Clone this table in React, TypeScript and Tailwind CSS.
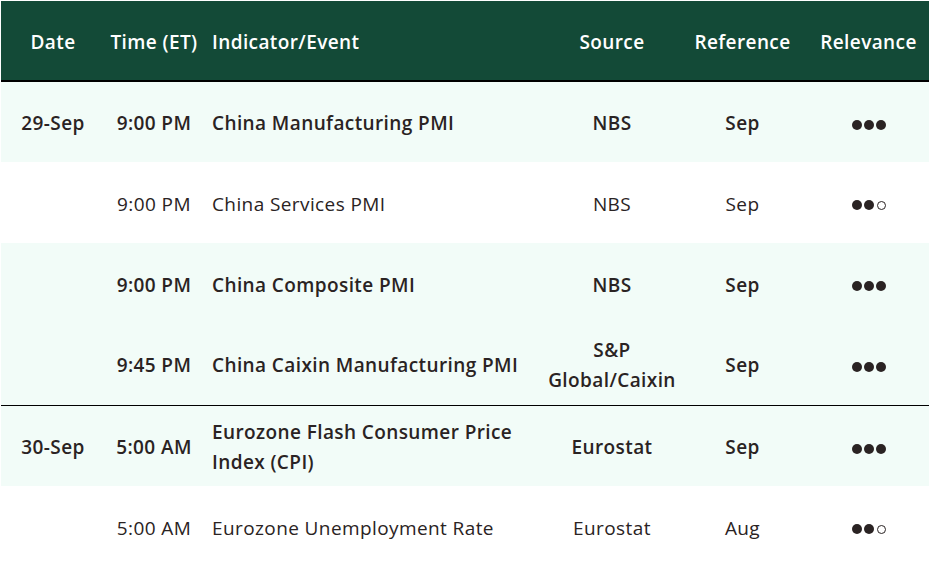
const ROWS = [
  { date: "29-Sep", time: "9:00 PM", event: "China Manufacturing PMI", source: "NBS", ref: "Sep", rel: 3, bold: true },
  { date: "", time: "9:00 PM", event: "China Services PMI", source: "NBS", ref: "Sep", rel: 2, bold: false },
  { date: "", time: "9:00 PM", event: "China Composite PMI", source: "NBS", ref: "Sep", rel: 3, bold: true },
  { date: "", time: "9:45 PM", event: "China Caixin Manufacturing PMI", source: "S&P Global/Caixin", ref: "Sep", rel: 3, bold: true, divider: true },
  { date: "30-Sep", time: "5:00 AM", event: "Eurozone Flash Consumer Price Index (CPI)", source: "Eurostat", ref: "Sep", rel: 3, bold: true },
  { date: "", time: "5:00 AM", event: "Eurozone Unemployment Rate", source: "Eurostat", ref: "Aug", rel: 2, bold: false },
];

function Dots({ n }: { n: number }) {
  return (
    <span className="inline-flex items-center gap-[2px] align-middle">
      {[0, 1, 2].map((i) =>
        i < n ? (
          <span key={i} className="h-[10px] w-[10px] rounded-full bg-[#2a2323]" />
        ) : (
          <span key={i} className="ml-px h-[9px] w-[9px] rounded-full border border-[#2a2323]" />
        )
      )}
    </span>
  );
}

export default function App() {
  return (
    <div className="min-h-[576px] bg-white pl-px pt-px" style={{ fontFamily: "'Open Sans', 'Noto Sans', sans-serif" }}>
      <table className="w-[928px] table-fixed border-collapse text-[19px] leading-[30px] tracking-[0.4px] text-[#2a2323]">
        <colgroup>
          <col className="w-[104px]" />
          <col className="w-[98px]" />
          <col className="w-[344px]" />
          <col className="w-[130px]" />
          <col className="w-[131px]" />
          <col className="w-[121px]" />
        </colgroup>
        <thead>
          <tr className="h-[80px] border-b-2 border-black bg-[#134a37] text-white">
            <th className="px-1 pt-[2px] text-center font-semibold">Date</th>
            <th className="px-0 pt-[2px] text-center font-semibold">Time (ET)</th>
            <th className="px-[9px] pt-[2px] text-left font-semibold">Indicator/Event</th>
            <th className="px-1 pt-[2px] text-center font-semibold">Source</th>
            <th className="px-1 pt-[2px] text-center font-semibold">Reference</th>
            <th className="px-1 pt-[2px] text-center font-semibold">Relevance</th>
          </tr>
        </thead>
        <tbody>
          {ROWS.map((r, i) => (
            <tr
              key={i}
              className={[
                "h-[81px]",
                r.bold ? "bg-[#f2fcf8] font-semibold" : "bg-white font-normal",
                r.divider ? "border-b border-black" : "",
              ].join(" ")}
            >
              <td className="px-1 pt-[2px] text-center">{r.date}</td>
              <td className="px-0 pt-[2px] text-center">{r.time}</td>
              <td className="px-[9px] pt-[2px] text-left">{r.event}</td>
              <td className="px-0 pt-[2px] text-center">{r.source}</td>
              <td className="px-1 pt-[2px] text-center">{r.ref}</td>
              <td className="px-1 pt-[2px] text-center">
                <Dots n={r.rel} />
              </td>
            </tr>
          ))}
        </tbody>
      </table>
    </div>
  );
}
